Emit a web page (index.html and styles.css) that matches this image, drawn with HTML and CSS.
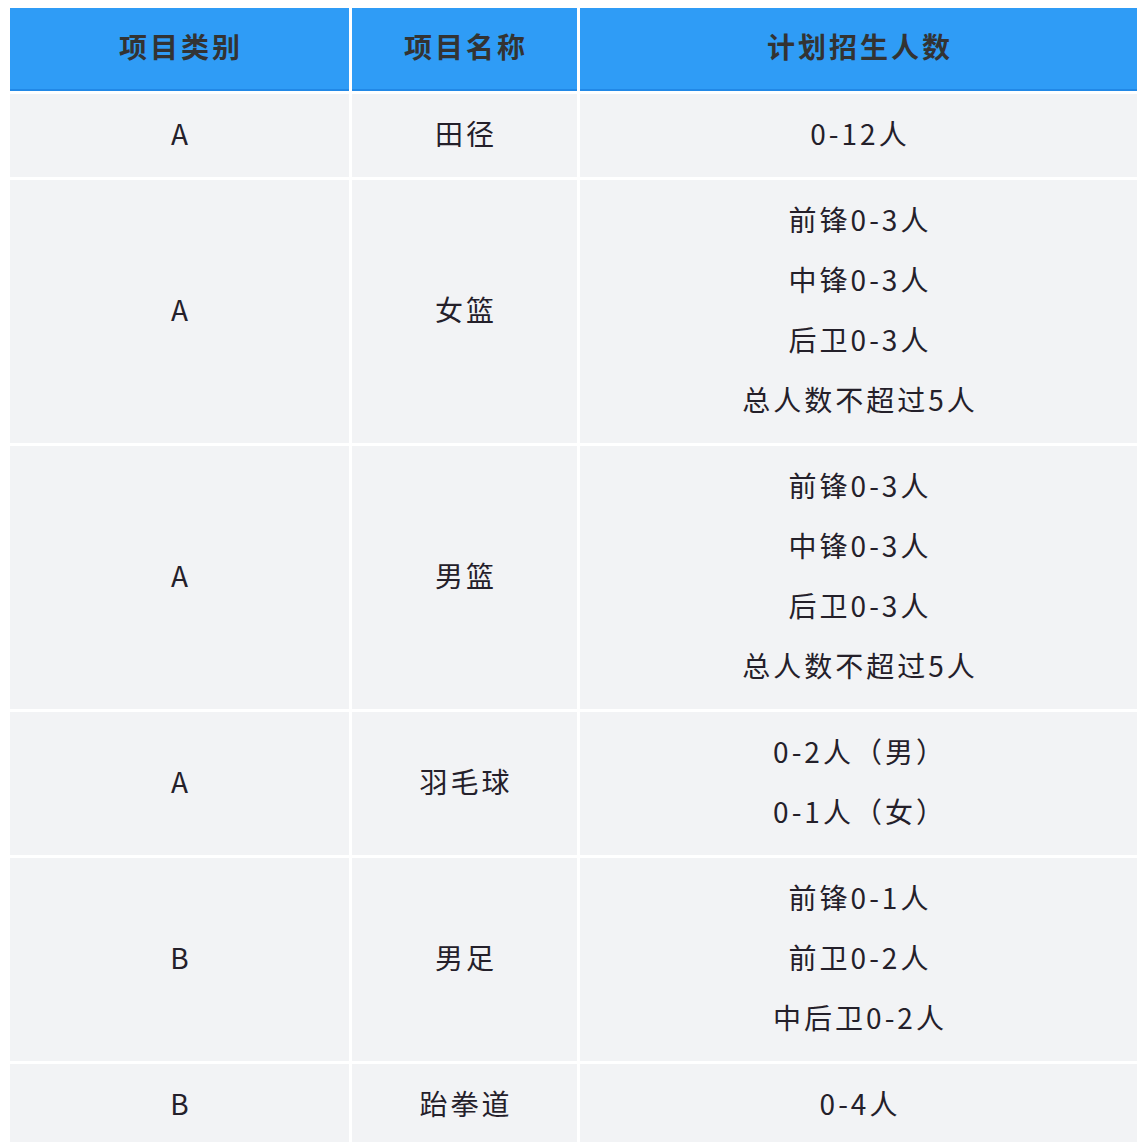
FILE: index.html
```html
<!DOCTYPE html>
<html lang="zh-CN">
<head>
<meta charset="utf-8">
<title>招生计划</title>
<link rel="stylesheet" href="styles.css">
</head>
<body>
<table class="plan">
  <colgroup>
    <col class="c1">
    <col class="c2">
    <col class="c3">
  </colgroup>
  <thead>
    <tr>
      <th>项目类别</th>
      <th>项目名称</th>
      <th>计划招生人数</th>
    </tr>
  </thead>
  <tbody>
    <tr>
      <td>A</td>
      <td>田径</td>
      <td><div class="ln">0-12人</div></td>
    </tr>
    <tr>
      <td>A</td>
      <td>女篮</td>
      <td>
        <div class="ln">前锋0-3人</div>
        <div class="ln">中锋0-3人</div>
        <div class="ln">后卫0-3人</div>
        <div class="ln">总人数不超过5人</div>
      </td>
    </tr>
    <tr>
      <td>A</td>
      <td>男篮</td>
      <td>
        <div class="ln">前锋0-3人</div>
        <div class="ln">中锋0-3人</div>
        <div class="ln">后卫0-3人</div>
        <div class="ln">总人数不超过5人</div>
      </td>
    </tr>
    <tr>
      <td>A</td>
      <td>羽毛球</td>
      <td>
        <div class="ln">0-2人（男）</div>
        <div class="ln">0-1人（女）</div>
      </td>
    </tr>
    <tr>
      <td>B</td>
      <td>男足</td>
      <td>
        <div class="ln">前锋0-1人</div>
        <div class="ln">前卫0-2人</div>
        <div class="ln">中后卫0-2人</div>
      </td>
    </tr>
    <tr>
      <td>B</td>
      <td>跆拳道</td>
      <td><div class="ln">0-4人</div></td>
    </tr>
  </tbody>
</table>
</body>
</html>
```
FILE: styles.css
```css
html, body {
  margin: 0;
  padding: 0;
  background: #ffffff;
}

.plan {
  margin: 5px 0 0 7px;
  width: 1133px;
  table-layout: fixed;
  border-collapse: separate;
  border-spacing: 3px;
  font-family: "Noto Sans CJK SC", "Noto Sans", sans-serif;
  font-size: 28px;
  letter-spacing: 3px;
  color: #24202a;
}

.c1 { width: 339px; }
.c2 { width: 225px; }
.c3 { width: 557px; }

.plan th {
  background: #2f9cf6;
  box-shadow: inset 0 -2px 0 #2188e6;
  color: #333333;
  font-weight: 700;
  height: 83px;
  box-sizing: border-box;
  padding: 8px 0 15px 3px;
  line-height: 60px;
  text-align: center;
  vertical-align: middle;
}

.plan td {
  background: #f2f3f5;
  padding: 9px 0 14px 3px;
  line-height: 60px;
  text-align: center;
  vertical-align: middle;
  font-weight: 400;
}

.ln {
  height: 60px;
  line-height: 60px;
  white-space: nowrap;
}
```
